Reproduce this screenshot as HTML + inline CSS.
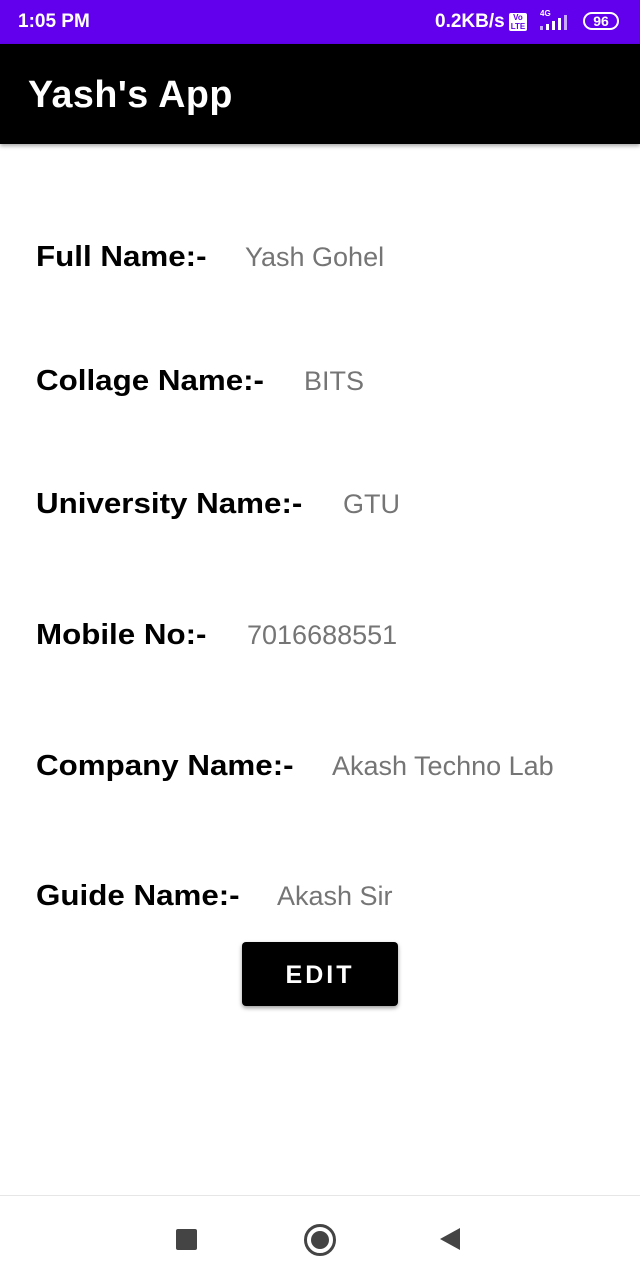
<!DOCTYPE html>
<html><head><style>
body{margin:0;width:640px;height:1280px;position:relative;background:#fff;font-family:"Liberation Sans",sans-serif;overflow:hidden}
.sb{position:absolute;top:0;left:0;width:640px;height:44px;background:#6200ee;color:#fff;font-weight:bold;font-size:19px}
.ab{position:absolute;top:44px;left:0;width:640px;height:100px;background:#000;box-shadow:0 2px 4px rgba(0,0,0,.35)}
.ab span{position:absolute;left:28px;top:30px;color:#fff;font-size:38px;font-weight:bold;letter-spacing:0.5px;transform-origin:left center;transform:scaleX(0.99)}
.l{position:absolute;font-weight:bold;font-size:29px;color:#000;transform-origin:left center;transform:scaleX(1.08);white-space:nowrap;line-height:34px}
.v{position:absolute;font-size:27px;color:#757575;white-space:nowrap;line-height:34px}
.btn{position:absolute;left:242px;top:942px;width:156px;height:64px;background:#000;border-radius:4px;box-shadow:0 2px 4px rgba(0,0,0,.4);color:#fff;font-size:25px;font-weight:bold;letter-spacing:3px;text-align:center;line-height:66px}
.nav{position:absolute;top:1195px;left:0;width:640px;height:85px;border-top:1px solid #e6e6e6;background:#fff}
</style></head><body>
<div class="sb">
<span style="position:absolute;left:18px;top:11px">1:05 PM</span>
<span style="position:absolute;left:435px;top:11px">0.2KB/s</span>
<span style="position:absolute;left:509px;top:13px;width:18px;height:18px;background:#fff;border-radius:2px;color:#6200ee;font-size:8px;line-height:9px;text-align:center">Vo<br>LTE</span>
<span style="position:absolute;left:540px;top:9px;font-size:8px">4G</span>
<svg style="position:absolute;left:538px;top:14px" width="36" height="18"><rect x="2" y="12" width="3" height="4" fill="#c9a8ff"/><rect x="8" y="10" width="3" height="6" fill="#fff"/><rect x="14" y="7" width="3" height="9" fill="#fff"/><rect x="20" y="4" width="3" height="12" fill="#fff"/><rect x="26" y="1" width="3" height="15" fill="#c9a8ff"/></svg>
<span style="position:absolute;left:583px;top:12px;width:36px;height:18px;border:2px solid #fff;border-radius:10px;box-sizing:border-box;font-size:14px;line-height:14px;text-align:center">96</span>
</div>
<div class="ab"><span>Yash's App</span></div>
<div class="l" style="left:36px;top:240px">Full Name:-</div><div class="v" style="left:245px;top:240px">Yash Gohel</div>
<div class="l" style="left:36px;top:364px">Collage Name:-</div><div class="v" style="left:304px;top:364px">BITS</div>
<div class="l" style="left:36px;top:487px">University Name:-</div><div class="v" style="left:343px;top:487px">GTU</div>
<div class="l" style="left:36px;top:618px">Mobile No:-</div><div class="v" style="left:247px;top:618px">7016688551</div>
<div class="l" style="left:36px;top:749px">Company Name:-</div><div class="v" style="left:332px;top:749px">Akash Techno Lab</div>
<div class="l" style="left:36px;top:879px">Guide Name:-</div><div class="v" style="left:277px;top:879px">Akash Sir</div>
<div class="btn">EDIT</div>
<div class="nav">
<div style="position:absolute;left:176px;top:33px;width:21px;height:21px;background:#444;border-radius:2px"></div>
<div style="position:absolute;left:304px;top:28px;width:26px;height:26px;border:3px solid #444;border-radius:50%"></div>
<div style="position:absolute;left:311px;top:35px;width:18px;height:18px;background:#444;border-radius:50%"></div>
<svg style="position:absolute;left:438px;top:31px" width="24" height="24"><path d="M22 1 L22 23 L2 12 Z" fill="#444"/></svg>
</div>
</body></html>
